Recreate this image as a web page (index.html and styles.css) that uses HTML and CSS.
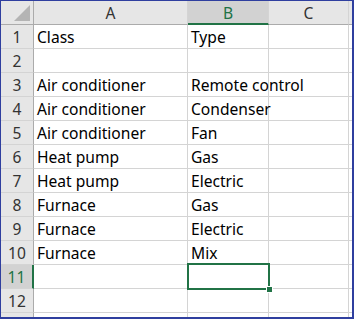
FILE: index.html
```html
<!DOCTYPE html>
<html lang="en">
<head>
    <meta charset="UTF-8">
    <title>Sheet</title>
    <link rel="stylesheet" href="styles.css">
</head>
<body>
    <div class="sheet">
        <!-- header row -->
        <div class="hd corner"><span class="tri"></span></div>
        <div class="hd col">A</div>
        <div class="hd col sel">B</div>
        <div class="hd col">C</div>
        <div class="hd col"></div>

        <div class="hd row">1</div><div class="c">Class</div><div class="c">Type</div><div class="c"></div><div class="c"></div>
        <div class="hd row">2</div><div class="c"></div><div class="c"></div><div class="c"></div><div class="c"></div>
        <div class="hd row">3</div><div class="c">Air conditioner</div><div class="c">Remote control</div><div class="c"></div><div class="c"></div>
        <div class="hd row">4</div><div class="c">Air conditioner</div><div class="c">Condenser</div><div class="c"></div><div class="c"></div>
        <div class="hd row">5</div><div class="c">Air conditioner</div><div class="c">Fan</div><div class="c"></div><div class="c"></div>
        <div class="hd row">6</div><div class="c">Heat pump</div><div class="c">Gas</div><div class="c"></div><div class="c"></div>
        <div class="hd row">7</div><div class="c">Heat pump</div><div class="c">Electric</div><div class="c"></div><div class="c"></div>
        <div class="hd row">8</div><div class="c">Furnace</div><div class="c">Gas</div><div class="c"></div><div class="c"></div>
        <div class="hd row">9</div><div class="c">Furnace</div><div class="c">Electric</div><div class="c"></div><div class="c"></div>
        <div class="hd row">10</div><div class="c">Furnace</div><div class="c">Mix</div><div class="c"></div><div class="c"></div>
        <div class="hd row sel">11</div><div class="c"></div><div class="c active"><span class="handle"></span></div><div class="c"></div><div class="c"></div>
        <div class="hd row">12</div><div class="c"></div><div class="c"></div><div class="c"></div><div class="c"></div>
        <div class="hd row"></div><div class="c"></div><div class="c"></div><div class="c"></div><div class="c"></div>
    </div>
</body>
</html>
```

FILE: styles.css
```css
body {
    margin: 0;
    background: #fff;
}
.sheet {
    width: 351px;
    height: 316px;
    overflow: hidden;
    border-style: solid;
    border-color: #2f3f9f;
    border-width: 1px 2px 2px 1px;
    display: grid;
    grid-template-columns: 33px 154px 81px 80px 30px;
    grid-auto-rows: 24px;
    font-family: "Noto Sans", sans-serif;
    font-size: 15.6px;
    color: #000;
}
.sheet > div {
    box-sizing: border-box;
    border-right: 1px solid #d4d4d4;
    border-bottom: 1px solid #d4d4d4;
    white-space: nowrap;
}
.c {
    padding: 2px 0 0 3px;
    line-height: 20px;
}
.hd {
    background: #e6e6e6;
    color: #333;
    display: flex;
    align-items: center;
    justify-content: center;
    padding-top: 1px;
}
.sheet > .col {
    border-bottom-color: #ababab;
}
.sheet > .row {
    border-right-color: #ababab;
    border-bottom-color: #d4d4d4;
}
.sheet > .corner {
    border-bottom-color: #ababab;
    border-right-color: #ababab;
    position: relative;
}
.tri {
    position: absolute;
    right: 3px;
    bottom: 3px;
    width: 0;
    height: 0;
    border-left: 16px solid transparent;
    border-bottom: 16px solid #b4b4b4;
}
.sheet > .col.sel {
    background: #d2d2d2;
    color: #217346;
    border-bottom: 2px solid #217346;
}
.sheet > .row.sel {
    background: #d2d2d2;
    color: #217346;
    border-right: 2px solid #217346;
}
.active {
    position: relative;
}
.active::before {
    content: "";
    position: absolute;
    top: -2px;
    left: -1px;
    right: -2px;
    bottom: -2px;
    border: 2px solid #217346;
}
.handle {
    position: absolute;
    right: -5px;
    bottom: -5px;
    width: 5px;
    height: 5px;
    background: #217346;
    border: 1px solid #fff;
    z-index: 1;
}
```
